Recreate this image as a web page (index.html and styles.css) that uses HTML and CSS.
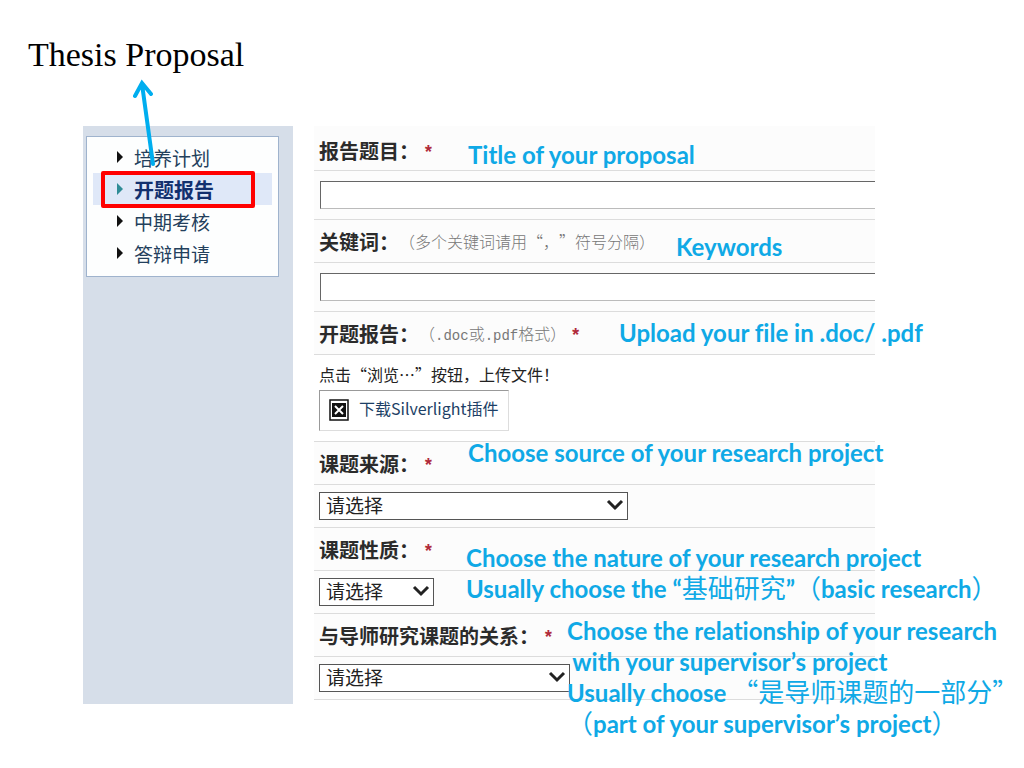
FILE: index.html
```html
<!DOCTYPE html>
<html lang="zh-CN">
<head>
    <meta charset="UTF-8">
    <meta name="viewport" content="width=device-width, initial-scale=1.0">
    <title>Thesis Proposal</title>
    <link rel="stylesheet" href="styles.css">
</head>
<body>

<header>
    <h1>Thesis Proposal</h1>
</header>

<div class="container">
    <aside class="sidebar">
        <nav class="menu">
            <a href="#">培养计划</a>
            <a href="#" class="active">开题报告</a>
            <a href="#">中期考核</a>
            <a href="#">答辩申请</a>
        </nav>
        <svg class="arrow" viewBox="0 0 24 90" fill="none" stroke="#00aeef" stroke-width="4" stroke-linecap="round">
            <path d="M20 85L9 5M2 17L9 4L18 15"/>
        </svg>
    </aside>

    <form class="form">
        <div class="row first">
            <label for="titulo">报告题目：</label><span class="required">*</span>
            <p class="note note-title">Title of your proposal</p>
        </div>
        <div class="row field">
            <input type="text" id="titulo" name="titulo">
        </div>

        <div class="row">
            <label for="keywords">关键词：</label><span class="hint">（多个关键词请用“，”符号分隔）</span>
            <p class="note note-keywords">Keywords</p>
        </div>
        <div class="row field">
            <input type="text" id="keywords" name="keywords">
        </div>

        <div class="row">
            <span class="label">开题报告：</span><span class="hint">（<span class="mono">.doc</span>或<span class="mono">.pdf</span>格式）</span><span class="required">*</span>
            <p class="note note-upload">Upload your file in .doc/ .pdf</p>
        </div>
        <div class="row upload">
            <p>点击“浏览…”按钮，上传文件！</p>
            <a href="#" class="plugin">
                <svg width="20" height="22" viewBox="0 0 20 22">
                    <rect x="1" y="1" width="18" height="20" fill="#fff" stroke="#111" stroke-width="1.5"/>
                    <rect x="3" y="4" width="14" height="14" fill="#111"/>
                    <path d="M6 7l8 8M14 7l-8 8" stroke="#fff" stroke-width="2"/>
                </svg>
                下载Silverlight插件
            </a>
        </div>

        <div class="row">
            <label for="source">课题来源：</label><span class="required">*</span>
            <p class="note note-source">Choose source of your research project</p>
        </div>
        <div class="row">
            <div class="select large">
                <select id="source"><option>请选择</option></select>
                <svg viewBox="0 0 18 12"><path d="M2 2l7 7 7-7" fill="none" stroke="#222" stroke-width="3"/></svg>
            </div>
        </div>

        <div class="row">
            <label for="nature">课题性质：</label><span class="required">*</span>
            <p class="note note-nature">Choose the nature of your research project<br>Usually choose the “<span class="cn">基础研究</span>”<span class="cn">（</span>basic research<span class="cn">）</span></p>
        </div>
        <div class="row">
            <div class="select small">
                <select id="nature"><option>请选择</option></select>
                <svg viewBox="0 0 18 12"><path d="M2 2l7 7 7-7" fill="none" stroke="#222" stroke-width="3"/></svg>
            </div>
        </div>

        <div class="row">
            <label for="relation">与导师研究课题的关系：</label><span class="required">*</span>
            <p class="note note-relation">Choose the relationship of your research<br>&nbsp;with your supervisor’s project<br>Usually choose <span class="cn">“是导师课题的一部分”</span><br><span class="cn">（</span>part of your supervisor’s project<span class="cn">）</span></p>
        </div>
        <div class="row">
            <div class="select medium">
                <select id="relation"><option>请选择</option></select>
                <svg viewBox="0 0 18 12"><path d="M2 2l7 7 7-7" fill="none" stroke="#222" stroke-width="3"/></svg>
            </div>
        </div>
    </form>
</div>

</body>
</html>
```
FILE: styles.css
```css
body {
    font-family: "Liberation Sans", "Noto Sans CJK SC", sans-serif;
    margin: 0;
    padding: 0;
    min-height: 100vh;
    background-color: #fff;
    text-spacing-trim: space-all;
}
header {
    padding: 35px 28px 0;
}
h1 {
    margin: 0;
    font-family: "Liberation Serif", serif;
    font-size: 34px;
    font-weight: normal;
    line-height: 40px;
    color: #000;
}
p {
    margin: 0;
}
.container {
    display: grid;
    grid-template-columns: 210px 1fr;
    gap: 21px;
    margin-top: 51px;
    padding: 0 149px 0 83px;
}

/* Menu lateral */
.sidebar {
    position: relative;
    background: #d6dee9;
}
.menu {
    margin: 10px 14px 0 3px;
    padding: 4px 6px 7px;
    background: #fdfefe;
    border: 1px solid #9fb3cd;
}
.menu a {
    position: relative;
    display: flex;
    align-items: center;
    gap: 11px;
    height: 32px;
    padding-left: 24px;
    font-family: "Noto Sans CJK SC", sans-serif;
    font-size: 19px;
    color: #23405c;
    text-decoration: none;
}
.menu a::before {
    content: "";
    border: 6px solid transparent;
    border-left-color: #111;
    border-right: 0;
}
.menu .active {
    background: #dfe8f8;
    font-size: 20px;
    font-weight: bold;
    color: #12306e;
}
.menu .active::before {
    border-left-color: #2f8c96;
}
.menu .active::after {
    content: "";
    position: absolute;
    inset: -2px 17px -3px 8px;
    border: 4px solid #f00;
    border-radius: 2px;
}
.arrow {
    position: absolute;
    top: -47px;
    left: 50px;
    width: 24px;
    height: 90px;
}

/* Formulário */
.form {
    padding-bottom: 4px;
}
.row {
    position: relative;
    display: flex;
    align-items: center;
    box-sizing: border-box;
    height: 43px;
    padding-left: 5px;
    border-bottom: 1px solid #dcdcdc;
    background: #fcfcfc;
    white-space: nowrap;
}
.first {
    height: 45px;
    padding-top: 4px;
}
.field {
    height: 49px;
    padding-left: 6px;
}
label, .label {
    font-family: "Noto Sans CJK SC", sans-serif;
    font-size: 20px;
    font-weight: bold;
    color: #2b2b2b;
}
.required {
    margin-left: 4px;
    padding-top: 6px;
    font-family: "Liberation Mono", monospace;
    font-size: 18px;
    font-weight: bold;
    color: #b02a3a;
}
.hint {
    font-family: "Noto Sans CJK SC", sans-serif;
    font-size: 16px;
    font-weight: 300;
    color: #777;
}
.mono {
    font-family: "Liberation Mono", monospace;
    font-size: 14px;
}
input[type="text"] {
    box-sizing: border-box;
    width: 100%;
    height: 28px;
    padding: 0 6px;
    border: 1px solid #666;
    border-bottom-color: #bbb;
    border-right: 0;
    background: #fff;
    font-size: 16px;
}
.upload {
    flex-direction: column;
    align-items: flex-start;
    gap: 3px;
    height: 87px;
    padding-top: 6px;
    background: #fff;
    font-family: "Noto Sans CJK SC", sans-serif;
    font-size: 16px;
    line-height: 26px;
    color: #222;
}
.plugin {
    display: flex;
    align-items: flex-start;
    gap: 10px;
    box-sizing: border-box;
    height: 41px;
    padding: 4px 9px;
    border: 1px solid #ddd;
    border-top-color: #999;
    border-left-color: #999;
    color: #1d3f66;
    text-decoration: none;
}
.plugin svg {
    margin-top: 4px;
}
.select {
    position: relative;
}
.select select {
    appearance: none;
    box-sizing: border-box;
    width: 100%;
    height: 28px;
    padding: 0 6px 2px;
    border: 1px solid #555;
    border-radius: 0;
    background: #fff;
    font-family: "Noto Sans CJK SC", sans-serif;
    font-size: 19px;
    line-height: 24px;
    color: #222;
}
.select svg {
    position: absolute;
    top: 7px;
    right: 4px;
    width: 18px;
    height: 12px;
    pointer-events: none;
}
.large {
    width: 309px;
}
.medium {
    width: 251px;
}
.small {
    width: 115px;
}

/* Anotações sobre o formulário */
.note {
    position: absolute;
    z-index: 1;
    font-family: Lato, "Noto Sans CJK SC", sans-serif;
    font-size: 24px;
    font-weight: bold;
    font-variant-ligatures: none;
    line-height: 31px;
    color: #0fa9e6;
}
.note .cn {
    font-family: "Noto Sans CJK SC", sans-serif;
    font-size: 26px;
    font-weight: 400;
    line-height: 1;
}
.note-title {
    top: 13px;
    left: 154px;
}
.note-keywords {
    top: 11px;
    left: 362px;
}
.note-upload {
    top: 5px;
    left: 305px;
}
.note-source {
    top: -5px;
    left: 154px;
}
.note-nature {
    top: 14px;
    left: 152px;
}
.note-relation {
    top: 1px;
    left: 253px;
}
```
